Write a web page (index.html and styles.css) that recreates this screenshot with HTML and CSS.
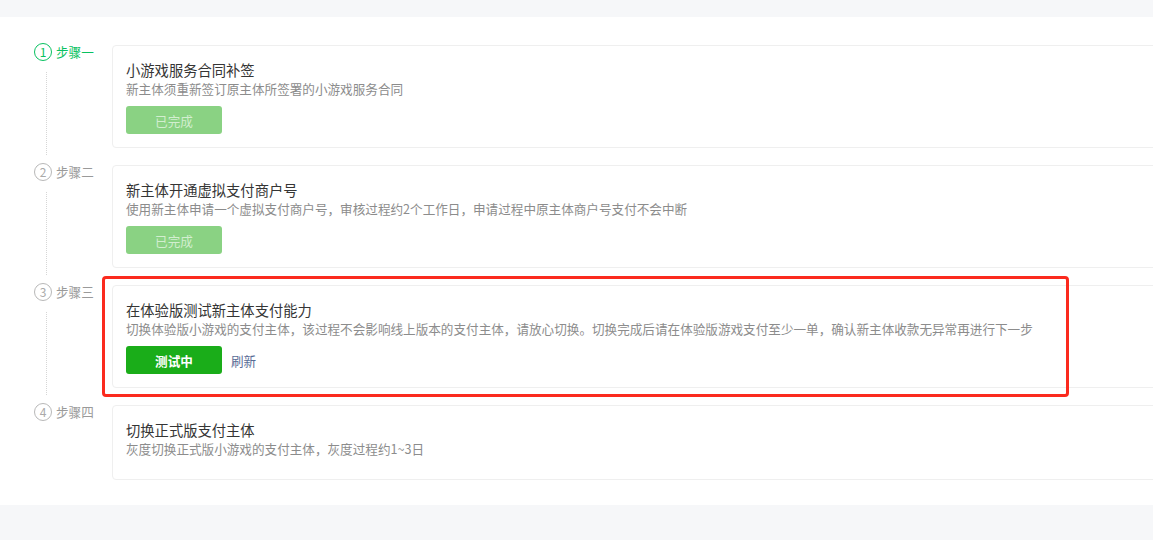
FILE: index.html
```html
<!DOCTYPE html>
<html>
<head>
    <meta charset="utf-8">
    <title>更换支付主体</title>
    <link rel="stylesheet" href="styles.css">
</head>
<body>
    <div class="panel">
        <div class="steps">
            <!-- 步骤一 -->
            <div class="step step-done">
                <div class="step-side">
                    <div class="step-head"><span class="step-num">1</span><span class="step-name">步骤一</span></div>
                    <div class="step-line"></div>
                </div>
                <div class="step-body">
                    <div class="card">
                        <div class="card-title">小游戏服务合同补签</div>
                        <div class="card-desc">新主体须重新签订原主体所签署的小游戏服务合同</div>
                        <div class="card-actions"><button class="btn btn-disabled">已完成</button></div>
                    </div>
                </div>
            </div>
            <!-- 步骤二 -->
            <div class="step">
                <div class="step-side">
                    <div class="step-head"><span class="step-num">2</span><span class="step-name">步骤二</span></div>
                    <div class="step-line"></div>
                </div>
                <div class="step-body">
                    <div class="card">
                        <div class="card-title">新主体开通虚拟支付商户号</div>
                        <div class="card-desc">使用新主体申请一个虚拟支付商户号，审核过程约2个工作日，申请过程中原主体商户号支付不会中断</div>
                        <div class="card-actions"><button class="btn btn-disabled">已完成</button></div>
                    </div>
                </div>
            </div>
            <!-- 步骤三 -->
            <div class="step">
                <div class="step-side">
                    <div class="step-head"><span class="step-num">3</span><span class="step-name">步骤三</span></div>
                    <div class="step-line"></div>
                </div>
                <div class="step-body">
                    <div class="card">
                        <div class="card-title">在体验版测试新主体支付能力</div>
                        <div class="card-desc">切换体验版小游戏的支付主体，该过程不会影响线上版本的支付主体，请放心切换。切换完成后请在体验版游戏支付至少一单，确认新主体收款无异常再进行下一步</div>
                        <div class="card-actions">
                            <button class="btn btn-primary">测试中</button>
                            <a class="link" href="#">刷新</a>
                        </div>
                    </div>
                    <div class="mark"></div>
                </div>
            </div>
            <!-- 步骤四 -->
            <div class="step">
                <div class="step-side">
                    <div class="step-head"><span class="step-num">4</span><span class="step-name">步骤四</span></div>
                    <div class="step-line"></div>
                </div>
                <div class="step-body">
                    <div class="card">
                        <div class="card-title">切换正式版支付主体</div>
                        <div class="card-desc">灰度切换正式版小游戏的支付主体，灰度过程约1~3日</div>
                        <div class="card-actions"></div>
                    </div>
                </div>
            </div>
        </div>
    </div>
</body>
</html>
```

FILE: styles.css
```css
html
{
    font-family: "Noto Sans CJK SC", "Microsoft YaHei", sans-serif;
}

body
{
    margin: 0;
    background-color: #f6f7f9;
    overflow: hidden;
    height: 540px;
}

.panel
{
    margin-top: 17px;
    background-color: #ffffff;
    padding: 28px 0 25px 34px;
}

.step
{
    display: flex;
}

.step-side
{
    width: 78px;
    flex: none;
    display: flex;
    flex-direction: column;
    margin-top: -2px;
}

.step-head
{
    display: flex;
    align-items: center;
    height: 18px;
}

.step-num
{
    box-sizing: border-box;
    width: 18px;
    height: 18px;
    border: 1px solid #b8b8b8;
    border-radius: 50%;
    font-size: 12px;
    line-height: 16px;
    text-align: center;
    color: #aaaaaa;
}

.step-name
{
    margin-left: 4px;
    font-size: 12.6px;
    line-height: 18px;
    color: #9a9a9a;
}

.step-done .step-num
{
    border-color: #07c160;
    color: #07c160;
}

.step-done .step-name
{
    color: #07c160;
}

.step-line
{
    flex: 1;
    margin: 11px 0 10px 12px;
    border-left: 1px dotted #d6d6d6;
}

.step:last-child .step-line
{
    display: none;
}

.step-body
{
    position: relative;
    width: 1080px;
    flex: none;
    padding-bottom: 17px;
}

.step:last-child .step-body
{
    padding-bottom: 0;
}

.card
{
    border: 1px solid #efefef;
    border-radius: 4px;
    padding: 14px 13px 13px 13px;
}

.card-title
{
    font-size: 14.3px;
    line-height: 20px;
    color: #353535;
}

.card-desc
{
    font-size: 12.6px;
    line-height: 18px;
    color: #8c8c8c;
    white-space: nowrap;
}

.card-actions
{
    display: flex;
    align-items: center;
    margin-top: 8px;
}

.btn
{
    width: 96px;
    height: 28px;
    border: none;
    border-radius: 3px;
    font-family: inherit;
    font-size: 12.6px;
    padding: 0;
}

.btn-disabled
{
    background-color: #8ad283;
    color: #d2eecf;
}

.btn-primary
{
    background-color: #1aad19;
    color: #ffffff;
    font-weight: bold;
}

.link
{
    margin-left: 9px;
    font-size: 12.6px;
    color: #576b95;
    text-decoration: none;
}

/* 标注框 */
.mark
{
    position: absolute;
    top: -9px;
    left: -10px;
    width: 967px;
    height: 121px;
    box-sizing: border-box;
    border: 3px solid #fb2a1e;
    border-radius: 4px;
}
```
